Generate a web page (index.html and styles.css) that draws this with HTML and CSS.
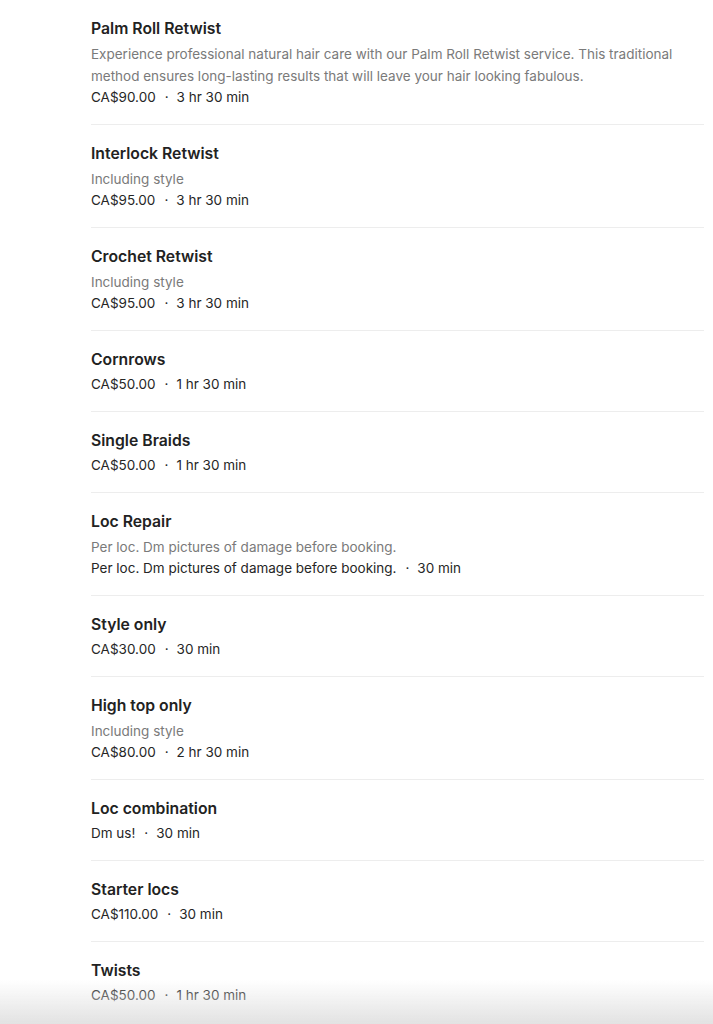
FILE: index.html
```html
<!DOCTYPE html>
<html>
<head>
<meta charset="utf-8">
<link rel="stylesheet" href="styles.css">
</head>
<body>
<ul class="services">
  <li class="service">
    <div class="title">Palm Roll Retwist</div>
    <div class="desc">Experience professional natural hair care with our Palm Roll Retwist service. This traditional method ensures long-lasting results that will leave your hair looking fabulous.</div>
    <div class="meta"><span>CA$90.00</span><span class="dot">·</span><span>3 hr 30 min</span></div>
  </li>
  <li class="service">
    <div class="title">Interlock Retwist</div>
    <div class="desc">Including style</div>
    <div class="meta"><span>CA$95.00</span><span class="dot">·</span><span>3 hr 30 min</span></div>
  </li>
  <li class="service">
    <div class="title">Crochet Retwist</div>
    <div class="desc">Including style</div>
    <div class="meta"><span>CA$95.00</span><span class="dot">·</span><span>3 hr 30 min</span></div>
  </li>
  <li class="service">
    <div class="title">Cornrows</div>
    <div class="meta"><span>CA$50.00</span><span class="dot">·</span><span>1 hr 30 min</span></div>
  </li>
  <li class="service">
    <div class="title">Single Braids</div>
    <div class="meta"><span>CA$50.00</span><span class="dot">·</span><span>1 hr 30 min</span></div>
  </li>
  <li class="service">
    <div class="title">Loc Repair</div>
    <div class="desc">Per loc. Dm pictures of damage before booking.</div>
    <div class="meta"><span>Per loc. Dm pictures of damage before booking.</span><span class="dot">·</span><span>30 min</span></div>
  </li>
  <li class="service">
    <div class="title">Style only</div>
    <div class="meta"><span>CA$30.00</span><span class="dot">·</span><span>30 min</span></div>
  </li>
  <li class="service">
    <div class="title">High top only</div>
    <div class="desc">Including style</div>
    <div class="meta"><span>CA$80.00</span><span class="dot">·</span><span>2 hr 30 min</span></div>
  </li>
  <li class="service">
    <div class="title">Loc combination</div>
    <div class="meta"><span>Dm us!</span><span class="dot">·</span><span>30 min</span></div>
  </li>
  <li class="service">
    <div class="title">Starter locs</div>
    <div class="meta"><span>CA$110.00</span><span class="dot">·</span><span>30 min</span></div>
  </li>
  <li class="service">
    <div class="title">Twists</div>
    <div class="meta"><span>CA$50.00</span><span class="dot">·</span><span>1 hr 30 min</span></div>
  </li>
</ul>
<div class="fade"></div>
</body>
</html>
```
FILE: styles.css
```css
html, body {
  margin: 0;
  padding: 0;
  background: #ffffff;
}
body {
  font-family: Inter, "Noto Sans", "Liberation Sans", sans-serif;
  color: #1f1f1f;
  -webkit-font-smoothing: antialiased;
}
.services {
  list-style: none;
  margin: 0;
  padding: 0 9px 0 91px;
}
.service {
  display: flex;
  flex-direction: column;
  padding: 17px 0 16px;
  border-bottom: 1px solid #ededed;
}
.title {
  font-size: 15.75px;
  font-weight: 560;
  line-height: 24px;
  color: #222222;
  margin-bottom: 2px;
}
.desc {
  font-size: 13.5px;
  line-height: 22px;
  color: #7a7a7a;
}
.meta {
  display: flex;
  font-size: 13.5px;
  line-height: 21px;
  color: #262626;
}
.dot {
  margin: 0 8px 0 9px;
}
.fade {
  position: fixed;
  left: 0;
  right: 0;
  bottom: 0;
  height: 44px;
  background: linear-gradient(to bottom, rgba(230,230,230,0), rgba(226,226,226,1));
  pointer-events: none;
}
```
